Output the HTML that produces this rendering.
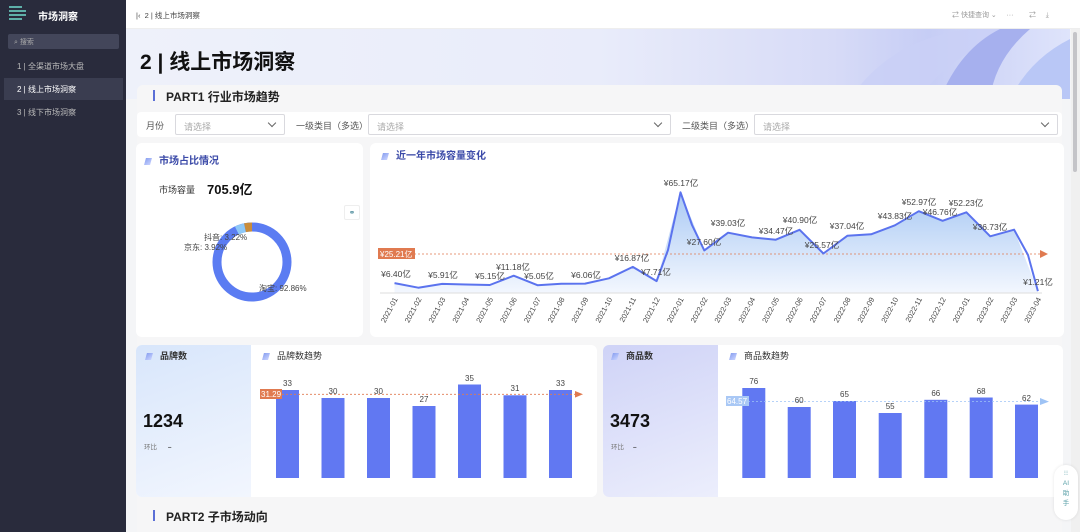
<!DOCTYPE html>
<html><head><meta charset="utf-8">
<style>
*{margin:0;padding:0;box-sizing:border-box}
body{width:1080px;height:532px;overflow:hidden;font-family:"Liberation Sans","Noto Sans CJK SC",sans-serif;background:#f4f5f7;position:relative;color:#333}
.abs{position:absolute}
#side{left:0;top:0;width:126px;height:532px;background:#292b3c}
.card{position:absolute;background:#fff;border-radius:6px}
.sel{position:absolute;top:114px;height:21px;border:1px solid #d9d9de;background:#fff;border-radius:2px;font-size:9px;color:#aaa;padding:5px 0 0 8px}
.sel:after{content:"";position:absolute;right:9px;top:5px;width:5px;height:5px;border-right:1.2px solid #666;border-bottom:1.2px solid #666;transform:rotate(45deg)}
.lbl{position:absolute;top:119px;font-size:9px;color:#555}
.ttl{position:absolute;font-size:10px;font-weight:bold;color:#3b4aa8}
.ic{display:inline-block;width:6px;height:7px;background:linear-gradient(135deg,#8aa0f0,#c9d3ff);transform:skewX(-15deg);margin-right:8px;vertical-align:-1px}
</style></head><body>
<div id="side" class="abs">
  <div class="abs" style="left:9px;top:6px;width:17px;height:17px">
    <div style="height:2px;background:#5eb0a9;margin-bottom:2px;width:13px"></div>
    <div style="height:2px;background:#5eb0a9;margin-bottom:2px;width:17px"></div>
    <div style="height:2px;background:#5eb0a9;margin-bottom:2px;width:17px"></div>
    <div style="height:2px;background:#5eb0a9;width:13px"></div>
  </div>
  <div class="abs" style="left:38px;top:8px;font-size:10px;color:#fff;font-weight:bold">市场洞察</div>
  <div class="abs" style="left:8px;top:34px;width:111px;height:15px;background:#43465a;border-radius:2px;font-size:7px;color:#aaa;padding:3px 0 0 6px">⌕ 搜索</div>
  <div class="abs" style="left:17px;top:61px;font-size:8px;color:#bbb">1 | 全渠道市场大盘</div>
  <div class="abs" style="left:4px;top:78px;width:119px;height:22px;background:#3a3d50"></div>
  <div class="abs" style="left:17px;top:84px;font-size:8px;color:#fff">2 | 线上市场洞察</div>
  <div class="abs" style="left:17px;top:107px;font-size:8px;color:#bbb">3 | 线下市场洞察</div>
</div>
<div class="abs" style="left:126px;top:0;width:954px;height:29px;background:#fff;border-bottom:1px solid #eee"></div>
<div class="abs" style="left:136px;top:10px;font-size:7.5px;color:#444">|‹ &nbsp;2 | 线上市场洞察</div>
<div class="abs" style="left:952px;top:10px;font-size:7px;color:#999">⇄ 快捷查询 ⌄ &nbsp;&nbsp;&nbsp; ··· &nbsp;&nbsp;&nbsp;&nbsp;&nbsp;&nbsp; ⇄ &nbsp;&nbsp;&nbsp; ⤓</div>
<div class="abs" style="left:126px;top:29px;width:944px;height:70px;background:linear-gradient(90deg,#eef1fa 0%,#e9ecfa 50%,#d7dbf7 75%,#c6cdf5 85%,#dfe4fb 100%)"></div>
<svg class="abs" style="left:830px;top:29px" width="240" height="70"><path d="M20 70 Q60 10 140 0 L200 0 Q120 20 90 70Z" fill="#c9cff6" opacity=".8"/><path d="M110 70 Q130 20 170 0 L200 0 Q165 30 160 70Z" fill="#a6b0ee"/><path d="M180 70 Q200 30 240 10 L240 70Z" fill="#b9c7f6"/></svg>
<div class="abs" style="left:140px;top:46px;font-size:21px;font-weight:bold;color:#111">2 | 线上市场洞察</div>
<div class="abs" style="left:1071px;top:29px;width:9px;height:503px;background:#f0f0f0"></div>
<div class="abs" style="left:1073px;top:32px;width:4px;height:140px;background:#c4c4c8;border-radius:2px"></div>
<div class="abs" style="left:137px;top:85px;width:925px;height:447px;background:#f6f6f7;border-radius:6px 6px 0 0"></div>
<div class="abs" style="left:153px;top:90px;width:2px;height:11px;background:#5b6fd6"></div>
<div class="abs" style="left:166px;top:88px;font-size:12px;font-weight:bold;color:#222">PART1 行业市场趋势</div>
<div class="abs" style="left:137px;top:112px;width:925px;height:25px;background:#fff;border-radius:4px"></div>
<div class="lbl" style="left:146px">月份</div>
<div class="sel" style="left:175px;width:110px">请选择</div>
<div class="lbl" style="left:296px">一级类目（多选）</div>
<div class="sel" style="left:368px;width:303px">请选择</div>
<div class="lbl" style="left:682px">二级类目（多选）</div>
<div class="sel" style="left:754px;width:304px">请选择</div>

<div class="card" style="left:136px;top:143px;width:227px;height:194px"></div>
<div class="ttl" style="left:145px;top:152px"><span class="ic"></span>市场占比情况</div>
<div class="abs" style="left:159px;top:183px;font-size:9px;color:#333">市场容量</div>
<div class="abs" style="left:207px;top:179px;font-size:13px;font-weight:bold;color:#111">705.9亿</div>
<div class="abs" style="left:344px;top:205px;width:16px;height:15px;background:#fff;border:1px solid #eee;border-radius:2px;font-size:8px;color:#4a8a9a;text-align:center;line-height:13px">⚭</div>
<svg class="abs" style="left:136px;top:143px" width="227" height="194">
 <g transform="translate(116,119) rotate(-90)">
  <circle r="35" fill="none" stroke="#5b7cf2" stroke-width="9"/>
  <circle r="35" fill="none" stroke="#c98c3a" stroke-width="9" stroke-dasharray="7.1 300" transform="rotate(-11.6)"/>
  <circle r="35" fill="none" stroke="#8ec8f7" stroke-width="9" stroke-dasharray="8.6 300" transform="rotate(-25.7)"/>
 </g>
 <text x="68" y="97" font-size="8" fill="#444">抖音: 3.22%</text>
 <text x="48" y="107" font-size="8" fill="#444">京东: 3.92%</text>
 <text x="123" y="148" font-size="8" fill="#444">淘宝: 92.86%</text>
</svg>

<div class="card" style="left:370px;top:143px;width:694px;height:194px"></div>
<div class="ttl" style="left:382px;top:147px"><span class="ic"></span>近一年市场容量变化</div>
<svg class="abs" style="left:0;top:0" width="1080" height="340" font-family="Liberation Sans, Noto Sans CJK SC, sans-serif">
<defs><linearGradient id="g" x1="0" y1="0" x2="0" y2="1"><stop offset="0" stop-color="#a9c9f4"/><stop offset="1" stop-color="#f3f7fe"/></linearGradient></defs>
<polygon fill="url(#g)" points="394.5,293 394.5,283.1 418.3,287.7 442.2,283.9 466,284.5 489.8,285 513.7,275.7 537.5,285.2 561.3,283.7 585.1,283.6 609,278.3 632.8,266.9 656.6,281.1 680.5,192.3 704.3,250.4 728.1,232.7 752,237.4 775.8,239.7 799.6,229.8 823.4,253.5 847.3,235.8 871.1,234.3 894.9,225.3 918.8,211.2 942.6,220.8 966.4,212.3 990.2,236.3 1014.1,229.7 1037.9,291.1 1037.9,293"/>
<line x1="380" y1="293" x2="1042" y2="293" stroke="#ddd"/>
<line x1="382" y1="254" x2="1042" y2="254" stroke="#e07a50" stroke-width=".8" stroke-dasharray="2 2"/>
<path d="M1040 250 L1048 254 L1040 258Z" fill="#e07a50"/>
<rect x="378" y="248" width="37" height="11" fill="#e07a50"/>
<text x="380" y="257" font-size="8" fill="#fff">¥25.21亿</text>
<polyline fill="none" stroke="#5b73ee" stroke-width="2" stroke-linejoin="round" points="394.5,283.1 418.3,287.7 442.2,283.9 466,284.5 489.8,285 513.7,275.7 537.5,285.2 561.3,283.7 585.1,283.6 609,278.3 632.8,266.9 656.6,281.1 668,250 680.5,192.3 692,225 704.3,250.4 728.1,232.7 752,237.4 775.8,239.7 799.6,229.8 823.4,253.5 847.3,235.8 871.1,234.3 894.9,225.3 918.8,211.2 942.6,220.8 966.4,212.3 990.2,236.3 1014.1,229.7 1028,255 1037.9,291.1"/>
<g font-size="8.5" fill="#444" text-anchor="middle">
<text x="396" y="277">¥6.40亿</text><text x="443" y="278">¥5.91亿</text><text x="490" y="279">¥5.15亿</text>
<text x="513" y="270">¥11.18亿</text><text x="539" y="279">¥5.05亿</text><text x="586" y="278">¥6.06亿</text>
<text x="632" y="261">¥16.87亿</text><text x="656" y="275">¥7.71亿</text><text x="681" y="186">¥65.17亿</text>
<text x="704" y="245">¥27.60亿</text><text x="728" y="226">¥39.03亿</text><text x="776" y="234">¥34.47亿</text>
<text x="800" y="223">¥40.90亿</text><text x="822" y="248">¥25.57亿</text><text x="847" y="229">¥37.04亿</text>
<text x="895" y="219">¥43.83亿</text><text x="919" y="205">¥52.97亿</text><text x="940" y="215">¥46.76亿</text>
<text x="966" y="206">¥52.23亿</text><text x="990" y="230">¥36.73亿</text><text x="1038" y="285">¥1.21亿</text>
</g>
<g font-size="7.5" fill="#444" text-anchor="end">
<text transform="translate(398,299) rotate(-62)">2021-01</text><text transform="translate(421.8,299) rotate(-62)">2021-02</text>
<text transform="translate(445.7,299) rotate(-62)">2021-03</text><text transform="translate(469.5,299) rotate(-62)">2021-04</text>
<text transform="translate(493.3,299) rotate(-62)">2021-05</text><text transform="translate(517.2,299) rotate(-62)">2021-06</text>
<text transform="translate(541,299) rotate(-62)">2021-07</text><text transform="translate(564.8,299) rotate(-62)">2021-08</text>
<text transform="translate(588.6,299) rotate(-62)">2021-09</text><text transform="translate(612.5,299) rotate(-62)">2021-10</text>
<text transform="translate(636.3,299) rotate(-62)">2021-11</text><text transform="translate(660.1,299) rotate(-62)">2021-12</text>
<text transform="translate(684,299) rotate(-62)">2022-01</text><text transform="translate(707.8,299) rotate(-62)">2022-02</text>
<text transform="translate(731.6,299) rotate(-62)">2022-03</text><text transform="translate(755.5,299) rotate(-62)">2022-04</text>
<text transform="translate(779.3,299) rotate(-62)">2022-05</text><text transform="translate(803.1,299) rotate(-62)">2022-06</text>
<text transform="translate(826.9,299) rotate(-62)">2022-07</text><text transform="translate(850.8,299) rotate(-62)">2022-08</text>
<text transform="translate(874.6,299) rotate(-62)">2022-09</text><text transform="translate(898.4,299) rotate(-62)">2022-10</text>
<text transform="translate(922.3,299) rotate(-62)">2022-11</text><text transform="translate(946.1,299) rotate(-62)">2022-12</text>
<text transform="translate(969.9,299) rotate(-62)">2023-01</text><text transform="translate(993.7,299) rotate(-62)">2023-02</text>
<text transform="translate(1017.6,299) rotate(-62)">2023-03</text><text transform="translate(1041.4,299) rotate(-62)">2023-04</text>
</g>
</svg>

<div class="card" style="left:136px;top:345px;width:461px;height:152px"></div>
<div class="abs" style="left:136px;top:345px;width:115px;height:152px;border-radius:6px 0 0 6px;background:linear-gradient(160deg,#d8e6fb,#f2f6fe)"></div>
<div class="abs" style="left:146px;top:349px;font-size:9px;color:#333;font-weight:bold"><span class="ic"></span>品牌数</div>
<div class="abs" style="left:143px;top:411px;font-size:18px;color:#111;font-weight:bold">1234</div>
<div class="abs" style="left:144px;top:441px;font-size:6.5px;color:#777">环比 &nbsp;&nbsp;&nbsp;&nbsp; <b style="color:#333">–</b></div>
<div class="abs" style="left:263px;top:349px;font-size:9px;color:#333"><span class="ic"></span>品牌数趋势</div>
<svg class="abs" style="left:0;top:340px" width="600" height="160" font-family="Liberation Sans, sans-serif">
<g fill="#6178f2">
<rect x="276" y="50" width="23" height="88"/><rect x="321.5" y="58" width="23" height="80"/><rect x="367" y="58" width="23" height="80"/>
<rect x="412.5" y="66" width="23" height="72"/><rect x="458" y="44.5" width="23" height="93.5"/><rect x="503.5" y="55.3" width="23" height="82.7"/><rect x="549" y="50" width="23" height="88"/>
</g>
<line x1="282" y1="54.3" x2="576" y2="54.3" stroke="#e07a50" stroke-width=".8" stroke-dasharray="2 2"/>
<path d="M575 51 L583 54.3 L575 57.6Z" fill="#e07a50"/>
<rect x="260" y="49" width="22" height="10" fill="#e07a50"/><text x="261" y="57" font-size="8" fill="#fff">31.29</text>
<g font-size="8" fill="#444" text-anchor="middle"><text x="287.5" y="46">33</text><text x="333" y="54">30</text><text x="378.5" y="54">30</text><text x="424" y="62">27</text><text x="469.5" y="41">35</text><text x="515" y="51">31</text><text x="560.5" y="46">33</text></g>
</svg>

<div class="card" style="left:603px;top:345px;width:460px;height:152px"></div>
<div class="abs" style="left:603px;top:345px;width:115px;height:152px;border-radius:6px 0 0 6px;background:linear-gradient(160deg,#cfd3f7,#eceefc)"></div>
<div class="abs" style="left:612px;top:349px;font-size:9px;color:#333;font-weight:bold"><span class="ic"></span>商品数</div>
<div class="abs" style="left:610px;top:411px;font-size:18px;color:#111;font-weight:bold">3473</div>
<div class="abs" style="left:611px;top:441px;font-size:6.5px;color:#777">环比 &nbsp;&nbsp;&nbsp; <b style="color:#333">–</b></div>
<div class="abs" style="left:730px;top:349px;font-size:9px;color:#333"><span class="ic"></span>商品数趋势</div>
<svg class="abs" style="left:600px;top:340px" width="480" height="160" font-family="Liberation Sans, sans-serif">
<g fill="#6178f2">
<rect x="142.3" y="48" width="23" height="90"/><rect x="187.7" y="67" width="23" height="71"/><rect x="233" y="61" width="23" height="77"/>
<rect x="278.7" y="73" width="23" height="65"/><rect x="324.3" y="59.8" width="23" height="78.2"/><rect x="369.7" y="57.5" width="23" height="80.5"/><rect x="415" y="64.6" width="23" height="73.4"/>
</g>
<line x1="148" y1="61.6" x2="441" y2="61.6" stroke="#9ec3f5" stroke-width=".8" stroke-dasharray="2 2"/>
<path d="M440 58 L449 61.6 L440 65Z" fill="#9ec3f5"/>
<rect x="126" y="56" width="23" height="10" fill="#a9c8f5"/><text x="127" y="64" font-size="8" fill="#fff">64.57</text>
<g font-size="8" fill="#444" text-anchor="middle"><text x="153.8" y="44">76</text><text x="199.2" y="63">60</text><text x="244.5" y="57">65</text><text x="290.2" y="69">55</text><text x="335.8" y="56">66</text><text x="381.2" y="54">68</text><text x="426.5" y="61">62</text></g>
</svg>
<div class="abs" style="left:1054px;top:465px;width:24px;height:55px;background:#fff;border-radius:12px;box-shadow:0 0 3px rgba(0,0,0,.1);font-size:6.5px;color:#5aa0a8;text-align:center;line-height:10px;padding-top:4px">⁝⁝<br>AI<br>助<br>手</div>

<div class="abs" style="left:153px;top:510px;width:2px;height:11px;background:#5b6fd6"></div>
<div class="abs" style="left:166px;top:508px;font-size:12px;font-weight:bold;color:#222">PART2 子市场动向</div>
</body></html>
